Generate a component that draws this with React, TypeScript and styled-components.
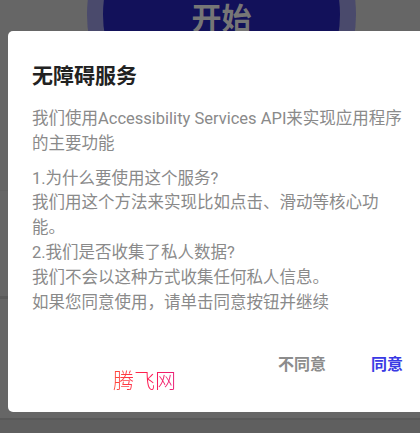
import React from "react";
import styled, { createGlobalStyle } from "styled-components";

const Global = createGlobalStyle`
  html, body { margin: 0; padding: 0; width: 420px; height: 433px; overflow: hidden; }
  body { background: #666666; font-family: Roboto, "Noto Sans CJK SC", sans-serif; }
  * { box-sizing: border-box; }
`;

const Screen = styled.div`
  position: relative;
  width: 420px;
  height: 433px;
  overflow: hidden;
  background: #666666;
  display: flex;
  flex-direction: column;
`;

const Hero = styled.div`
  height: 191px;
  flex: none;
  padding-left: 87px;
  border-bottom: 1px solid #626262;
`;

const StartCircle = styled.div`
  width: 269px;
  height: 269px;
  margin-top: -120px;
  padding-top: 3px;
  border-radius: 50%;
  background: #12115a;
  border: 16px solid #4a4a6c;
  display: flex;
  align-items: center;
  justify-content: center;
  color: #767676;
  font-family: "Noto Sans CJK SC", sans-serif;
  font-weight: 700;
  font-size: 30px;
`;

const ListRow = styled.div<{ $h: number; $line: string; $lw: number }>`
  height: ${(p) => p.$h}px;
  flex: none;
  border-bottom: ${(p) => p.$lw}px solid ${(p) => p.$line};
`;

const BottomBar = styled.div`
  flex: 1;
  background: #5f5f5f;
`;

const Dialog = styled.div`
  position: absolute;
  left: 8px;
  top: 31px;
  width: 420px;
  height: 381px;
  background: #ffffff;
  border-radius: 5px;
  padding: 31px 24px 0 24px;
  display: flex;
  flex-direction: column;
`;

const Title = styled.div`
  font-family: "Noto Sans CJK SC", sans-serif;
  font-weight: 700;
  font-size: 21px;
  line-height: 25px;
  color: #222222;
`;

const Body = styled.div`
  margin-top: 20px;
  font-family: Roboto, "Noto Sans CJK SC", sans-serif;
  font-size: 16.5px;
  line-height: 24.8px;
  color: #8a8a8a;
  display: flex;
  flex-direction: column;
  gap: 10px;
`;

const Para = styled.p`
  margin: 0;
`;

const Actions = styled.div`
  margin-top: 38px;
  display: flex;
  justify-content: flex-end;
  gap: 45px;
  padding-right: 1px;
`;

const ActionButton = styled.button<{ $primary?: boolean }>`
  border: none;
  background: none;
  padding: 0;
  font-family: "Noto Sans CJK SC", sans-serif;
  font-weight: 700;
  font-size: 16px;
  line-height: 20px;
  color: ${(p) => (p.$primary ? "#3a3ae4" : "#8c8c8c")};
`;

const Watermark = styled.div`
  position: absolute;
  left: 113px;
  top: 367px;
  font-family: "Noto Sans CJK SC", sans-serif;
  font-weight: 300;
  font-size: 21px;
  line-height: 24px;
  background: linear-gradient(90deg, #ff4a3a, #ff1a50 55%, #e8207a);
  -webkit-background-clip: text;
  background-clip: text;
  color: transparent;
`;

export default function App() {
  return (
    <>
      <Global />
      <Screen>
        <Hero>
          <StartCircle>开始</StartCircle>
        </Hero>
        <ListRow $h={108} $line="#5b5b5b" $lw={3} />
        <ListRow $h={121} $line="#595959" $lw={2} />
        <BottomBar />
        <Dialog>
          <Title>无障碍服务</Title>
          <Body>
            <Para>我们使用Accessibility Services API来实现应用程序的主要功能</Para>
            <Para>
              1.为什么要使用这个服务?
              <br />
              我们用这个方法来实现比如点击、滑动等核心功能。
              <br />
              2.我们是否收集了私人数据?
              <br />
              我们不会以这种方式收集任何私人信息。
              <br />
              如果您同意使用，请单击同意按钮并继续
            </Para>
          </Body>
          <Actions>
            <ActionButton>不同意</ActionButton>
            <ActionButton $primary>同意</ActionButton>
          </Actions>
        </Dialog>
        <Watermark>腾飞网</Watermark>
      </Screen>
    </>
  );
}
